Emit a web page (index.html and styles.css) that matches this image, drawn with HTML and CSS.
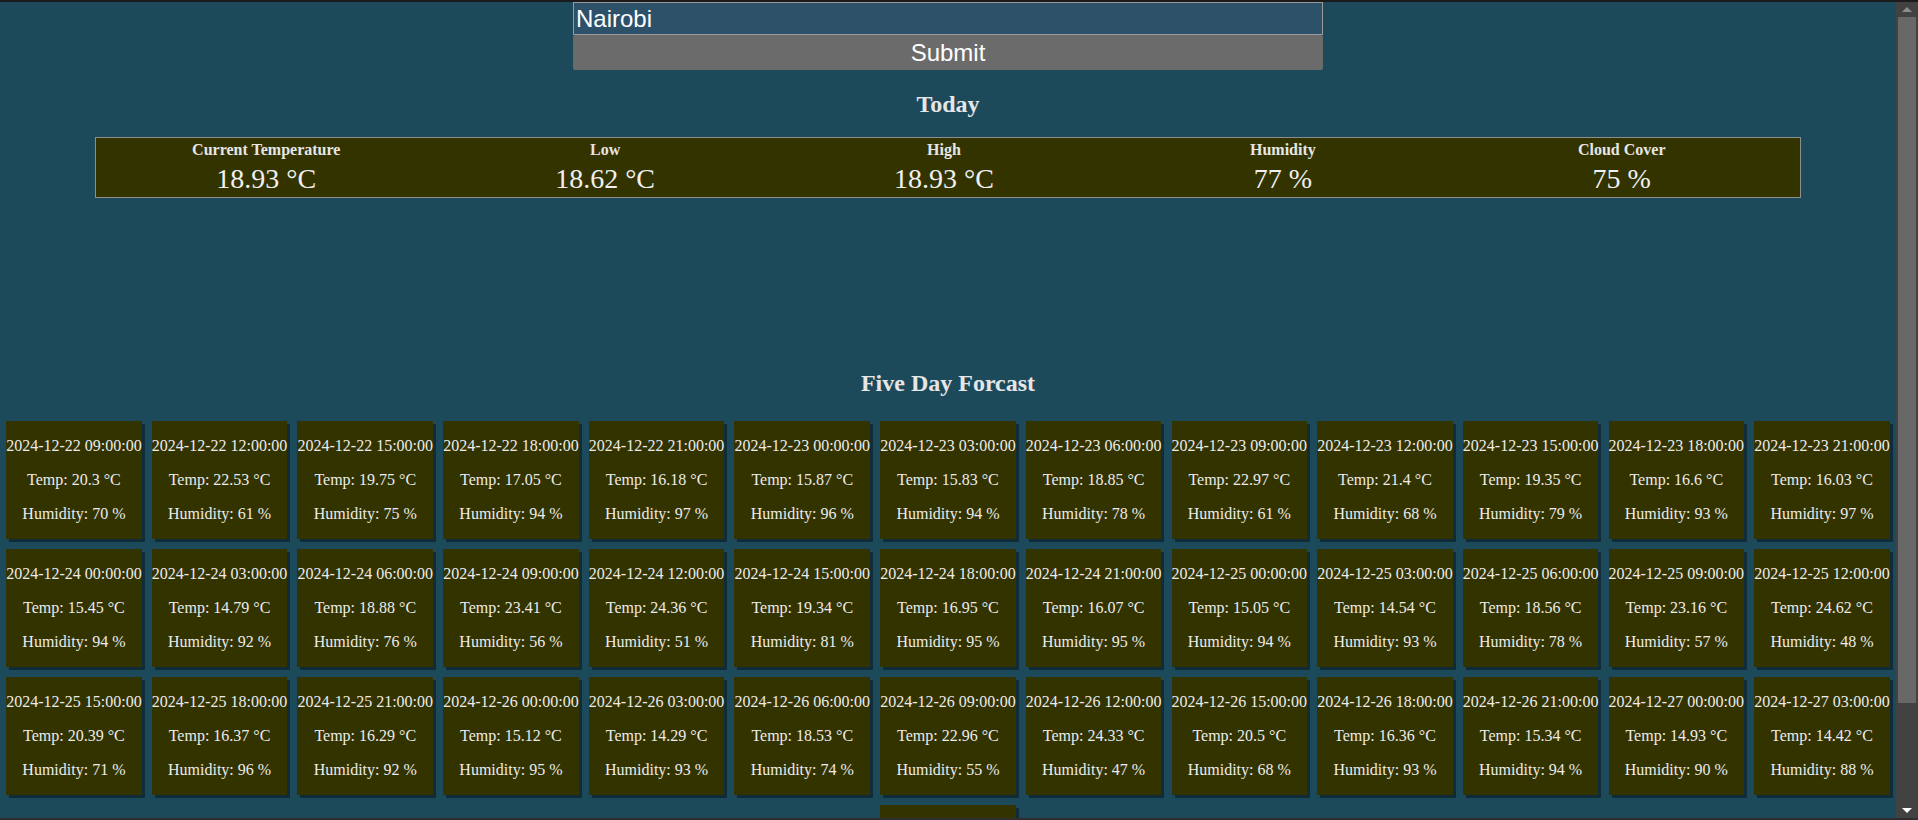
FILE: index.html
```html
<!DOCTYPE html>
<html lang="en">
<head>
<meta charset="utf-8">
<title>Weather</title>
<link rel="stylesheet" href="styles.css">
</head>
<body>
<div class="window">
  <main class="page">
    <form class="search">
      <input class="city" type="text" value="Nairobi">
      <button class="submit" type="button">Submit</button>
    </form>

    <h2 class="heading heading-today">Today</h2>
    <section class="today">
      <div class="stat"><div class="stat-label">Current Temperature</div><div class="stat-value">18.93 °C</div></div>
      <div class="stat"><div class="stat-label">Low</div><div class="stat-value">18.62 °C</div></div>
      <div class="stat"><div class="stat-label">High</div><div class="stat-value">18.93 °C</div></div>
      <div class="stat"><div class="stat-label">Humidity</div><div class="stat-value">77 %</div></div>
      <div class="stat"><div class="stat-label">Cloud Cover</div><div class="stat-value">75 %</div></div>
    </section>

    <h2 class="heading">Five Day Forcast</h2>
    <section class="forecast">
      <div class="card"><p>2024-12-22 09:00:00</p><p>Temp: 20.3 °C</p><p>Humidity: 70 %</p></div>
      <div class="card"><p>2024-12-22 12:00:00</p><p>Temp: 22.53 °C</p><p>Humidity: 61 %</p></div>
      <div class="card"><p>2024-12-22 15:00:00</p><p>Temp: 19.75 °C</p><p>Humidity: 75 %</p></div>
      <div class="card"><p>2024-12-22 18:00:00</p><p>Temp: 17.05 °C</p><p>Humidity: 94 %</p></div>
      <div class="card"><p>2024-12-22 21:00:00</p><p>Temp: 16.18 °C</p><p>Humidity: 97 %</p></div>
      <div class="card"><p>2024-12-23 00:00:00</p><p>Temp: 15.87 °C</p><p>Humidity: 96 %</p></div>
      <div class="card"><p>2024-12-23 03:00:00</p><p>Temp: 15.83 °C</p><p>Humidity: 94 %</p></div>
      <div class="card"><p>2024-12-23 06:00:00</p><p>Temp: 18.85 °C</p><p>Humidity: 78 %</p></div>
      <div class="card"><p>2024-12-23 09:00:00</p><p>Temp: 22.97 °C</p><p>Humidity: 61 %</p></div>
      <div class="card"><p>2024-12-23 12:00:00</p><p>Temp: 21.4 °C</p><p>Humidity: 68 %</p></div>
      <div class="card"><p>2024-12-23 15:00:00</p><p>Temp: 19.35 °C</p><p>Humidity: 79 %</p></div>
      <div class="card"><p>2024-12-23 18:00:00</p><p>Temp: 16.6 °C</p><p>Humidity: 93 %</p></div>
      <div class="card"><p>2024-12-23 21:00:00</p><p>Temp: 16.03 °C</p><p>Humidity: 97 %</p></div>

      <div class="card"><p>2024-12-24 00:00:00</p><p>Temp: 15.45 °C</p><p>Humidity: 94 %</p></div>
      <div class="card"><p>2024-12-24 03:00:00</p><p>Temp: 14.79 °C</p><p>Humidity: 92 %</p></div>
      <div class="card"><p>2024-12-24 06:00:00</p><p>Temp: 18.88 °C</p><p>Humidity: 76 %</p></div>
      <div class="card"><p>2024-12-24 09:00:00</p><p>Temp: 23.41 °C</p><p>Humidity: 56 %</p></div>
      <div class="card"><p>2024-12-24 12:00:00</p><p>Temp: 24.36 °C</p><p>Humidity: 51 %</p></div>
      <div class="card"><p>2024-12-24 15:00:00</p><p>Temp: 19.34 °C</p><p>Humidity: 81 %</p></div>
      <div class="card"><p>2024-12-24 18:00:00</p><p>Temp: 16.95 °C</p><p>Humidity: 95 %</p></div>
      <div class="card"><p>2024-12-24 21:00:00</p><p>Temp: 16.07 °C</p><p>Humidity: 95 %</p></div>
      <div class="card"><p>2024-12-25 00:00:00</p><p>Temp: 15.05 °C</p><p>Humidity: 94 %</p></div>
      <div class="card"><p>2024-12-25 03:00:00</p><p>Temp: 14.54 °C</p><p>Humidity: 93 %</p></div>
      <div class="card"><p>2024-12-25 06:00:00</p><p>Temp: 18.56 °C</p><p>Humidity: 78 %</p></div>
      <div class="card"><p>2024-12-25 09:00:00</p><p>Temp: 23.16 °C</p><p>Humidity: 57 %</p></div>
      <div class="card"><p>2024-12-25 12:00:00</p><p>Temp: 24.62 °C</p><p>Humidity: 48 %</p></div>

      <div class="card"><p>2024-12-25 15:00:00</p><p>Temp: 20.39 °C</p><p>Humidity: 71 %</p></div>
      <div class="card"><p>2024-12-25 18:00:00</p><p>Temp: 16.37 °C</p><p>Humidity: 96 %</p></div>
      <div class="card"><p>2024-12-25 21:00:00</p><p>Temp: 16.29 °C</p><p>Humidity: 92 %</p></div>
      <div class="card"><p>2024-12-26 00:00:00</p><p>Temp: 15.12 °C</p><p>Humidity: 95 %</p></div>
      <div class="card"><p>2024-12-26 03:00:00</p><p>Temp: 14.29 °C</p><p>Humidity: 93 %</p></div>
      <div class="card"><p>2024-12-26 06:00:00</p><p>Temp: 18.53 °C</p><p>Humidity: 74 %</p></div>
      <div class="card"><p>2024-12-26 09:00:00</p><p>Temp: 22.96 °C</p><p>Humidity: 55 %</p></div>
      <div class="card"><p>2024-12-26 12:00:00</p><p>Temp: 24.33 °C</p><p>Humidity: 47 %</p></div>
      <div class="card"><p>2024-12-26 15:00:00</p><p>Temp: 20.5 °C</p><p>Humidity: 68 %</p></div>
      <div class="card"><p>2024-12-26 18:00:00</p><p>Temp: 16.36 °C</p><p>Humidity: 93 %</p></div>
      <div class="card"><p>2024-12-26 21:00:00</p><p>Temp: 15.34 °C</p><p>Humidity: 94 %</p></div>
      <div class="card"><p>2024-12-27 00:00:00</p><p>Temp: 14.93 °C</p><p>Humidity: 90 %</p></div>
      <div class="card"><p>2024-12-27 03:00:00</p><p>Temp: 14.42 °C</p><p>Humidity: 88 %</p></div>

      <div class="card"><p>2024-12-27 06:00:00</p><p>Temp: 18.71 °C</p><p>Humidity: 74 %</p></div>
    </section>
  </main>
  <div class="scrollbar" aria-hidden="true">
    <div class="arrow arrow-up"></div>
    <div class="thumb"></div>
    <div class="track"></div>
    <div class="arrow arrow-down"></div>
  </div>
</div>
</body>
</html>
```

FILE: styles.css
```css
html, body {
  margin: 0;
  padding: 0;
  height: 100%;
  overflow: hidden;
  background: #1c1c1c;
}

.window {
  height: 820px;
  box-sizing: border-box;
  border-top: 2px solid #1b1b1b;
  border-bottom: 2px solid #2e2e2e;
  display: flex;
}

.page {
  flex: 1;
  min-width: 0;
  overflow: hidden;
  background: #1d4a5a;
  color: #e6e6e6;
  font-family: "Liberation Serif", "Times New Roman", serif;
}

/* search form */
.search {
  width: 750px;
  margin: 0 auto;
  display: flex;
  flex-direction: column;
}

.city {
  height: 33px;
  box-sizing: border-box;
  margin: 0;
  padding: 0 2px;
  border: 1px solid #9a9a9a;
  background: #2c5169;
  color: #ffffff;
  font-family: "Liberation Sans", Arial, sans-serif;
  font-size: 24px;
  outline: none;
}

.submit {
  height: 35px;
  margin: 0;
  padding: 0;
  border: none;
  border-radius: 2px;
  background: #6b6b6b;
  color: #ffffff;
  font-family: "Liberation Sans", Arial, sans-serif;
  font-size: 24px;
}

/* headings */
.heading {
  margin: 20px 0;
  text-align: center;
  font-size: 24px;
  font-weight: bold;
  color: #e6e6e6;
}

.heading-today {
  margin-top: 21px;
  margin-bottom: 19px;
}

/* today summary */
.today {
  width: 90%;
  margin: 0 auto 172px;
  box-sizing: border-box;
  display: flex;
  padding: 3px 9px 3px 1px;
  border: 1px solid #8e8e8e;
  background: #333300;
}

.stat {
  flex: 1;
  text-align: center;
}

.stat-label {
  font-size: 16px;
  font-weight: bold;
  line-height: 18px;
}

.stat-value {
  margin-top: 4px;
  font-size: 28px;
  line-height: 31px;
  color: #f0f0f0;
}

/* forecast cards */
.forecast {
  display: flex;
  flex-wrap: wrap;
  justify-content: space-evenly;
  margin-top: -1px;
}

.card {
  margin: 5px 4px;
  background: #333300;
  box-shadow: 3px 3px 0 #0f2c38;
  text-align: center;
  font-size: 16px;
  color: #ececec;
}

.card p {
  margin: 16px 0;
  white-space: nowrap;
}

/* window scrollbar */
.scrollbar {
  width: 22px;
  background: #424242;
  display: flex;
  flex-direction: column;
  align-items: center;
}

.arrow {
  height: 15px;
  width: 100%;
  display: flex;
  align-items: center;
  justify-content: center;
}

.arrow::before {
  content: "";
  width: 0;
  height: 0;
  border-left: 5px solid transparent;
  border-right: 5px solid transparent;
}

.arrow-up::before {
  border-bottom: 5px solid #8d8d8d;
}

.arrow-down::before {
  border-top: 5px solid #ffffff;
}

.thumb {
  width: 18px;
  height: 686px;
  background: #686868;
}

.track {
  flex: 1;
}
```
